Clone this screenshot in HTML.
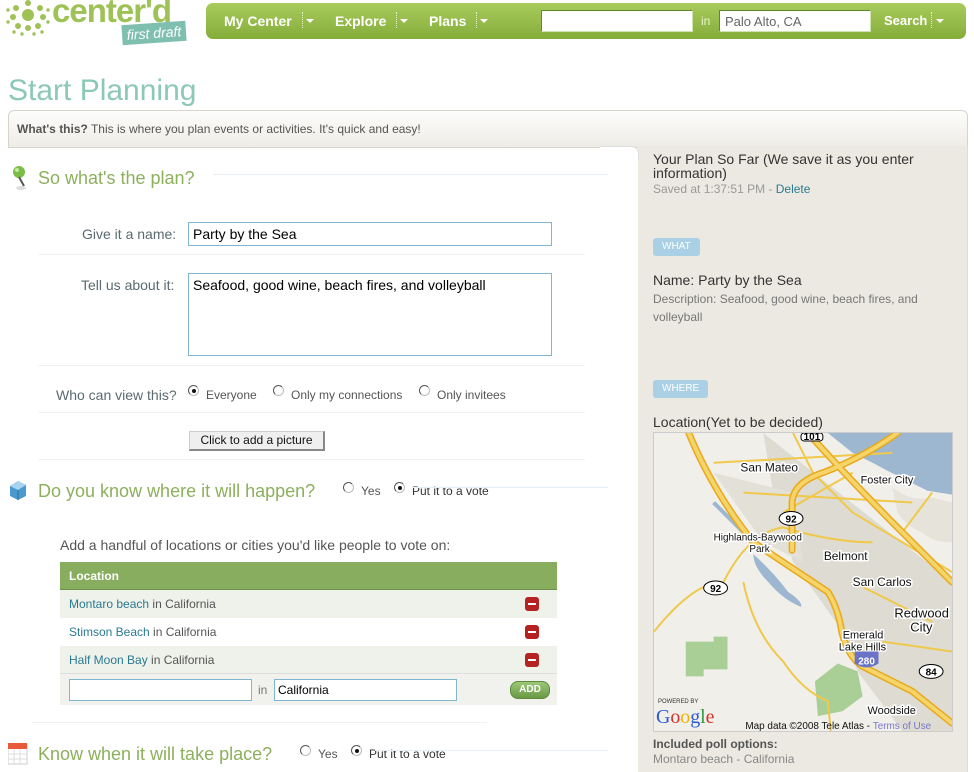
<!DOCTYPE html>
<html><head><meta charset="utf-8"><style>
*{margin:0;padding:0;box-sizing:border-box}
body{width:974px;height:772px;overflow:hidden;background:#fff;font-family:"Liberation Sans",Arial,sans-serif;position:relative;color:#333}
.a{position:absolute;white-space:nowrap}
.nav{left:206px;top:3px;width:760px;height:36px;border-radius:7px;background:linear-gradient(#a8cb5c,#85ad3a)}
.nv{color:#fff;font-weight:bold;font-size:14px;top:13px}
.dd{top:12px;height:16px;border-left:1px dotted #e8f3d0}
.tri{width:0;height:0;border-left:4px solid transparent;border-right:4px solid transparent;border-top:4px solid #fff;top:19px}
.inp{background:#fff;border:1px solid #5d8a2c;border-right-color:#cfe3b0;border-bottom-color:#cfe3b0}
.sec{font-size:18px;color:#8cb05c}
.lbl{font-size:14px;color:#5a6a70}
.box{border:1px solid #7fb6d0;background:#fff;font-size:14px;color:#000;padding:3px 4px}
.sep{height:1px;background:#eef3f3}
.rad{width:11px;height:11px;border-radius:50%;border:1px solid #bbb;border-top-color:#555;border-left-color:#555;background:#fff}
.rad.on::after{content:"";position:absolute;left:3px;top:3px;width:4px;height:4px;border-radius:50%;background:#111}
.sm{font-size:12px;color:#555}
.row{left:60px;width:497px;height:28px}
.rt{font-size:12px;color:#555;left:9px;top:7px}
.rt b{font-weight:normal;color:#2a7a90}
.min{left:465px;top:7px;width:14px;height:14px;border-radius:3px;background:#b52222}
.min::after{content:"";position:absolute;left:3px;top:6px;width:8px;height:2px;background:#fff}
.badge{background:#aad0e6;color:#fff;font-size:10px;height:18px;line-height:18px;padding:0 9px;border-radius:3px}
</style></head><body>

<!-- logo -->
<svg class="a" style="left:6px;top:0" width="46" height="38" viewBox="0 0 46 38">
<g fill="#9ec256">
<circle cx="22" cy="15" r="6"/>
<circle cx="10" cy="8" r="3"/><circle cx="22" cy="3" r="3"/><circle cx="34" cy="8" r="3"/>
<circle cx="7" cy="17" r="3"/><circle cx="37" cy="17" r="3"/>
<circle cx="12" cy="26" r="3"/><circle cx="22" cy="28" r="3"/><circle cx="32" cy="26" r="3"/>
<circle cx="2" cy="10" r="1.7"/><circle cx="42" cy="10" r="1.7"/><circle cx="2" cy="22" r="1.7"/><circle cx="42" cy="22" r="1.7"/>
<circle cx="8" cy="32" r="1.7"/><circle cx="16" cy="34" r="1.7"/><circle cx="28" cy="34" r="1.7"/><circle cx="36" cy="32" r="1.7"/>
</g></svg>
<div class="a" style="left:52px;top:-8px;font-size:33px;font-weight:bold;color:#9ec256;letter-spacing:-1px">center'd</div>
<div class="a" style="left:122px;top:23px;width:64px;height:20px;background:#7fbfb0;transform:rotate(-4deg);color:#fff;font-style:italic;font-size:14px;line-height:20px;text-align:center">first draft</div>

<!-- nav -->
<div class="a nav"></div>
<div class="a nv" style="left:224px">My Center</div><div class="a dd" style="left:302px"></div><div class="a tri" style="left:306px"></div>
<div class="a nv" style="left:335px">Explore</div><div class="a dd" style="left:396px"></div><div class="a tri" style="left:400px"></div>
<div class="a nv" style="left:429px">Plans</div><div class="a dd" style="left:476px"></div><div class="a tri" style="left:480px"></div>
<div class="a inp" style="left:541px;top:10px;width:152px;height:22px"></div>
<div class="a" style="left:701px;top:14px;color:#e8f3d0;font-size:12px">in</div>
<div class="a inp" style="left:719px;top:10px;width:152px;height:22px;font-size:13px;color:#666;padding:3px 5px">Palo Alto, CA</div>
<div class="a nv" style="left:884px;font-size:13px">Search</div><div class="a dd" style="left:931px"></div><div class="a tri" style="left:936px"></div>

<div class="a" style="left:8px;top:74px;font-size:30px;color:#8cc8b8">Start Planning</div>
<div class="a" style="left:8px;top:110px;width:960px;height:38px;border:1px solid #d8d4ca;border-radius:6px 6px 0 0;background:linear-gradient(#fdfdfc,#eeece6)"></div>
<div class="a" style="left:17px;top:122px;font-size:12px;color:#555"><b>What's this?</b> This is where you plan events or activities. It's quick and easy!</div>

<!-- right panel -->
<div class="a" style="left:638px;top:146px;width:330px;height:626px;background:#ebe9e2;border-right:1px solid #ddd"></div>
<div class="a" style="left:600px;top:146px;width:39px;height:14px;border-top:1px solid #ddd;border-right:1px solid #ddd;border-radius:0 8px 0 0;background:#fff"></div>
<div class="a" style="left:653px;top:152px;font-size:14px;line-height:14px;color:#333;white-space:normal;width:300px">Your Plan So Far (We save it as you enter information)</div>
<div class="a" style="left:653px;top:182px;font-size:12px;color:#999">Saved at 1:37:51 PM - <span style="color:#2a7a90">Delete</span></div>
<div class="a badge" style="left:653px;top:238px">WHAT</div>
<div class="a" style="left:653px;top:272px;font-size:14px;color:#333">Name: Party by the Sea</div>
<div class="a" style="left:653px;top:290px;font-size:12px;line-height:18px;color:#777;white-space:normal;width:290px">Description: Seafood, good wine, beach fires, and volleyball</div>
<div class="a badge" style="left:653px;top:380px">WHERE</div>
<div class="a" style="left:653px;top:414px;font-size:14px;color:#333">Location(Yet to be decided)</div>

<svg class="a" style="left:653px;top:432px;border:1px solid #ccc" width="300" height="300" viewBox="0 0 300 300" font-family="Liberation Sans,Arial,sans-serif">
<rect width="300" height="300" fill="#f1efe9"/>
<path d="M110 0 L300 150 L300 300 L250 300 L205 240 L190 200 L140 130 L120 60 Z" fill="#dedbd2"/>
<path d="M60 40 L140 60 L150 130 L110 110 Z" fill="#e3e0d8"/>
<path d="M175 0 L300 0 L300 62 L275 58 L255 48 L235 38 L220 30 L200 20 Z" fill="#9db7d0"/>
<path d="M240 55 Q260 70 280 65 L300 70 L300 110 Q280 110 270 100 Q255 95 245 80 Z" fill="#e6e3da"/>
<path d="M100 122 Q120 140 135 160 Q150 170 148 175 Q130 168 115 150 Q100 135 100 122Z" fill="#9db7d0"/>
<path d="M60 70 Q80 90 100 110" stroke="#9db7d0" stroke-width="4" fill="none"/>
<path d="M32 210 L60 210 L60 205 L74 205 L74 238 L50 238 L50 245 L32 245 Z" fill="#a9cf97"/>
<path d="M162 250 L185 232 L205 240 L210 265 L190 280 L165 285 Z" fill="#a9cf97"/>
<g fill="none" stroke="#f0c84a" stroke-width="2">
<path d="M0 200 Q40 150 70 150 Q95 100 130 95 Q180 110 220 110"/>
<path d="M90 150 Q100 200 130 230 Q150 260 175 270 L178 300"/>
<path d="M140 0 L160 40 L200 80 L250 110 L300 140"/>
<path d="M60 30 L240 20 M90 60 L260 70 M130 80 L200 40 M200 150 L280 190 M230 210 L300 220 M250 100 L280 60"/>
</g>
<g fill="none" stroke="#e8a91d" stroke-width="7" stroke-linecap="round">
<path d="M35 0 Q60 60 100 110 Q130 130 175 160 Q185 175 189 200 Q195 225 210 235 Q240 250 260 260 L300 292"/>
<path d="M155 0 Q200 50 250 100 Q280 130 300 150"/>
<path d="M139 118 L139 70 Q140 50 170 40 Q210 25 245 0"/>
</g>
<g fill="none" stroke="#f5d469" stroke-width="4" stroke-linecap="round">
<path d="M35 0 Q60 60 100 110 Q130 130 175 160 Q185 175 189 200 Q195 225 210 235 Q240 250 260 260 L300 292"/>
<path d="M155 0 Q200 50 250 100 Q280 130 300 150"/>
<path d="M139 118 L139 70 Q140 50 170 40 Q210 25 245 0"/>
</g>
<g font-size="12" fill="#111" stroke="#fff" stroke-width="3" paint-order="stroke">
<text x="87" y="39">San Mateo</text><text x="208" y="51" font-size="11">Foster City</text>
<text x="60" y="108" font-size="10">Highlands-Baywood</text><text x="96" y="120" font-size="10">Park</text>
<text x="171" y="128">Belmont</text><text x="200" y="154">San Carlos</text>
<text x="242" y="186" font-size="13">Redwood</text><text x="258" y="200" font-size="13">City</text>
<text x="190" y="207" font-size="11">Emerald</text><text x="186" y="219" font-size="11">Lake Hills</text>
<text x="215" y="283" font-size="11">Woodside</text>
</g>
<g stroke="#000" stroke-width="1" fill="#fff"><ellipse cx="138" cy="86" rx="12" ry="7"/><ellipse cx="62" cy="156" rx="12" ry="7"/><ellipse cx="279" cy="240" rx="12" ry="7"/><rect x="148" y="0" width="22" height="8" rx="3"/></g>
<g font-size="10" font-weight="bold" text-anchor="middle"><text x="138" y="90">92</text><text x="62" y="160">92</text><text x="279" y="244">84</text><text x="159" y="7">101</text></g>
<path d="M202 220 L226 220 L226 232 Q214 240 202 232 Z" fill="#6b73c6"/><text x="214" y="233" font-size="10" font-weight="bold" fill="#fff" text-anchor="middle">280</text>
<text x="4" y="272" font-size="6" fill="#333">POWERED BY</text>
<text x="2" y="292" font-size="20" font-family="Liberation Serif,serif" fill="#2a5bd7">G<tspan fill="#d9302c">o</tspan><tspan fill="#f0b400">o</tspan>g<tspan fill="#2a9a3a">l</tspan><tspan fill="#d9302c">e</tspan></text>
<text x="92" y="298" font-size="10" fill="#111">Map data ©2008 Tele Atlas - <tspan fill="#77c">Terms of Use</tspan></text>
</svg>
<div class="a" style="left:653px;top:737px;font-size:12px;font-weight:bold;color:#555">Included poll options:</div>
<div class="a" style="left:653px;top:752px;font-size:12px;color:#888">Montaro beach - California</div>

<!-- section 1 -->
<svg class="a" style="left:12px;top:165px" width="16" height="26"><circle cx="7" cy="7" r="6" fill="#7cbd45"/><circle cx="5" cy="5" r="2" fill="#c6e8a5"/><path d="M7 12 L12 21" stroke="#555" stroke-width="2"/><ellipse cx="9" cy="23" rx="5" ry="2" fill="#ddd"/></svg>
<div class="a sec" style="left:38px;top:168px">So what's the plan?</div>
<div class="a sep" style="left:213px;top:174px;width:395px;background:#e8eff4"></div>
<div class="a lbl" style="left:82px;top:226px">Give it a name:</div>
<div class="a box" style="left:188px;top:222px;width:364px;height:24px">Party by the Sea</div>
<div class="a sep" style="left:38px;top:254px;width:547px"></div>
<div class="a lbl" style="left:81px;top:277px">Tell us about it:</div>
<div class="a box" style="left:188px;top:273px;width:364px;height:83px">Seafood, good wine, beach fires, and volleyball</div>
<div class="a sep" style="left:38px;top:365px;width:547px"></div>
<div class="a lbl" style="left:56px;top:387px">Who can view this?</div>
<div class="a rad on" style="left:188px;top:385px"></div><div class="a sm" style="left:206px;top:388px">Everyone</div>
<div class="a rad" style="left:273px;top:385px"></div><div class="a sm" style="left:291px;top:388px">Only my connections</div>
<div class="a rad" style="left:419px;top:385px"></div><div class="a sm" style="left:437px;top:388px">Only invitees</div>
<div class="a sep" style="left:38px;top:412px;width:547px"></div>
<div class="a" style="left:189px;top:431px;width:136px;height:20px;background:#efefef;border:1px solid #ccc;border-right:2px solid #888;border-bottom:2px solid #888;font-size:12px;text-align:center;line-height:17px;color:#111">Click to add a picture</div>
<div class="a sep" style="left:38px;top:459px;width:547px"></div>

<!-- section 2 -->
<svg class="a" style="left:8px;top:479px" width="20" height="22"><path d="M2 7 L10 2 L18 6 L18 17 L10 21 L2 17Z" fill="#4a9ad0"/><path d="M2 7 L10 11 L18 6 L10 2Z" fill="#a6d4f0"/><path d="M10 11 L10 21" stroke="#2a6f9e"/></svg>
<div class="a sec" style="left:38px;top:481px">Do you know where it will happen?</div>
<div class="a rad" style="left:343px;top:482px"></div><div class="a sm" style="left:361px;top:484px;font-size:12px">Yes</div>
<div class="a rad on" style="left:394px;top:482px"></div><div class="a sm" style="left:412px;top:484px;color:#333">Put it to a vote</div>
<div class="a sep" style="left:412px;top:487px;width:196px;background:#e8eff4"></div>
<div class="a" style="left:60px;top:537px;font-size:14px;color:#555">Add a handful of locations or cities you'd like people to vote on:</div>
<div class="a row" style="top:562px;background:#88ad5f;border-bottom:1px solid #6d9146"><div class="a" style="left:9px;top:7px;color:#fff;font-weight:bold;font-size:12px">Location</div></div>
<div class="a row" style="top:590px;background:#eff1eb"><div class="a rt"><b>Montaro beach</b> in California</div><div class="a min"></div></div>
<div class="a row" style="top:618px;background:#fff"><div class="a rt"><b>Stimson Beach</b> in California</div><div class="a min"></div></div>
<div class="a row" style="top:646px;background:#eff1eb;border-bottom:1px solid #ddd"><div class="a rt"><b>Half Moon Bay</b> in California</div><div class="a min"></div></div>
<div class="a row" style="top:674px;height:31px;background:#f1f1ee"></div>
<div class="a box" style="left:69px;top:679px;width:183px;height:22px"></div>
<div class="a sm" style="left:258px;top:683px;color:#777">in</div>
<div class="a box" style="left:274px;top:679px;width:183px;height:22px;font-size:12px;padding:3px">California</div>
<div class="a" style="left:510px;top:681px;width:40px;height:18px;border-radius:8px;background:linear-gradient(#9cc777,#6a9a45);border:1px solid #5a8a3a;color:#fff;font-size:10px;font-weight:bold;text-align:center;line-height:16px">ADD</div>
<div class="a sep" style="left:32px;top:722px;width:455px"></div>

<!-- section 3 -->
<svg class="a" style="left:8px;top:743px" width="20" height="22"><rect x="0" y="0" width="19" height="21" fill="#fff" stroke="#ccc"/><rect x="0" y="0" width="19" height="6" fill="#e85a3a"/><path d="M0 11H19M0 16H19M6 6V21M12 6V21" stroke="#ddd"/></svg>
<div class="a sec" style="left:38px;top:744px">Know when it will take place?</div>
<div class="a rad" style="left:300px;top:745px"></div><div class="a sm" style="left:318px;top:747px">Yes</div>
<div class="a rad on" style="left:351px;top:745px"></div><div class="a sm" style="left:369px;top:747px;color:#333">Put it to a vote</div>
<div class="a sep" style="left:375px;top:750px;width:233px;background:#e8eff4"></div>
</body></html>
